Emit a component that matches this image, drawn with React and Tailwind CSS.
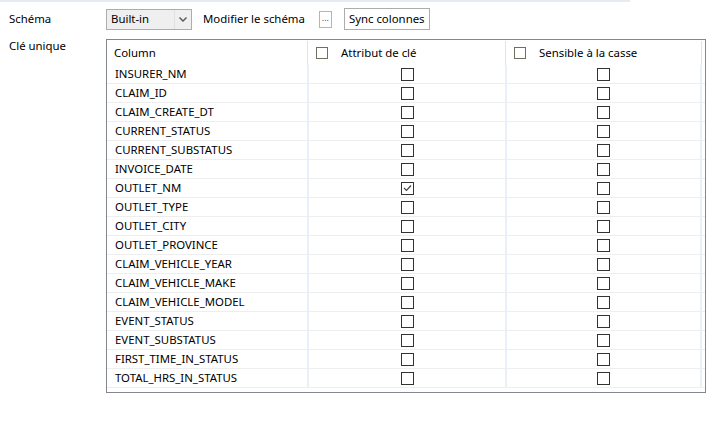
import React from "react";

const rows = [
  "INSURER_NM",
  "CLAIM_ID",
  "CLAIM_CREATE_DT",
  "CURRENT_STATUS",
  "CURRENT_SUBSTATUS",
  "INVOICE_DATE",
  "OUTLET_NM",
  "OUTLET_TYPE",
  "OUTLET_CITY",
  "OUTLET_PROVINCE",
  "CLAIM_VEHICLE_YEAR",
  "CLAIM_VEHICLE_MAKE",
  "CLAIM_VEHICLE_MODEL",
  "EVENT_STATUS",
  "EVENT_SUBSTATUS",
  "FIRST_TIME_IN_STATUS",
  "TOTAL_HRS_IN_STATUS",
];

function Box({ checked }) {
  return (
    <div className="w-[13px] h-[13px] border border-[#333333] bg-white flex items-center justify-center">
      {checked && (
        <svg width="9" height="8" viewBox="0 0 9 8">
          <path d="M1 4 L3.5 6.5 L8 1.5" fill="none" stroke="#444" strokeWidth="1.2" />
        </svg>
      )}
    </div>
  );
}

export default function App() {
  return (
    <div
      className="w-[717px] h-[423px] bg-white text-[11.4px] text-black relative"
      style={{ fontFamily: '"Noto Sans", "Open Sans", sans-serif' }}
    >
      <div className="w-[630px] h-[2px] bg-[#e6ebf3]" />
      <div className="flex items-center h-[28px] mt-[3px]">
        <div className="w-[106px] pl-[9px]">Schéma</div>
        <div className="w-[86px] h-[21px] border border-[#adadad] bg-[#efefef] flex items-center">
          <span className="flex-1 pl-[4px]">Built-in</span>
          <div className="w-[17px] h-full border-l border-[#e0e0e0] flex items-center justify-center">
            <svg width="8" height="5" viewBox="0 0 8 5">
              <path d="M0.5 0.5 L4 4 L7.5 0.5" fill="none" stroke="#555" strokeWidth="1.4" />
            </svg>
          </div>
        </div>
        <div className="ml-[11px]">Modifier le schéma</div>
        <div className="ml-[14px] w-[13px] h-[17px] border border-[#b5b5b5] bg-white flex items-center justify-center text-[9px] leading-none text-[#555] pb-[3px]">
          ...
        </div>
        <div className="ml-[12px] h-[22px] px-[4px] border border-[#adadad] bg-white flex items-center">
          Sync colonnes
        </div>
      </div>
      <div className="flex mt-[6px]">
        <div className="w-[106px] pl-[9px] leading-none pt-[1px]">Clé unique</div>
        <div className="w-[600px] h-[354px] border border-[#828790] flex flex-col">
          <div className="flex h-[25px] items-center pt-[1px]">
            <div className="w-[200px] pl-[7px]">Column</div>
            <div className="w-[198px] h-full border-l border-[#e3e3e3] flex items-center pl-[8px]">
              <div className="w-[12px] h-[12px] border border-[#6f6f5f] mr-[13px]" />
              Attribut de clé
            </div>
            <div className="w-[197px] h-full border-l border-[#e3e3e3] border-r flex items-center pl-[8px]">
              <div className="w-[12px] h-[12px] border border-[#6f6f5f] mr-[13px]" />
              Sensible à la casse
            </div>
          </div>
          {rows.map((name) => (
            <div key={name} className="flex h-[19px] border-b border-[#eeeeee]">
              <div className="w-[200px] pl-[8px] flex items-center">{name}</div>
              <div className="w-[198px] border-l-2 border-[#eaf0fa] flex items-center justify-center">
                <Box checked={name === "OUTLET_NM"} />
              </div>
              <div className="w-[197px] border-l-2 border-r-2 border-[#eaf0fa] flex items-center justify-center">
                <Box />
              </div>
            </div>
          ))}
        </div>
      </div>
    </div>
  );
}
